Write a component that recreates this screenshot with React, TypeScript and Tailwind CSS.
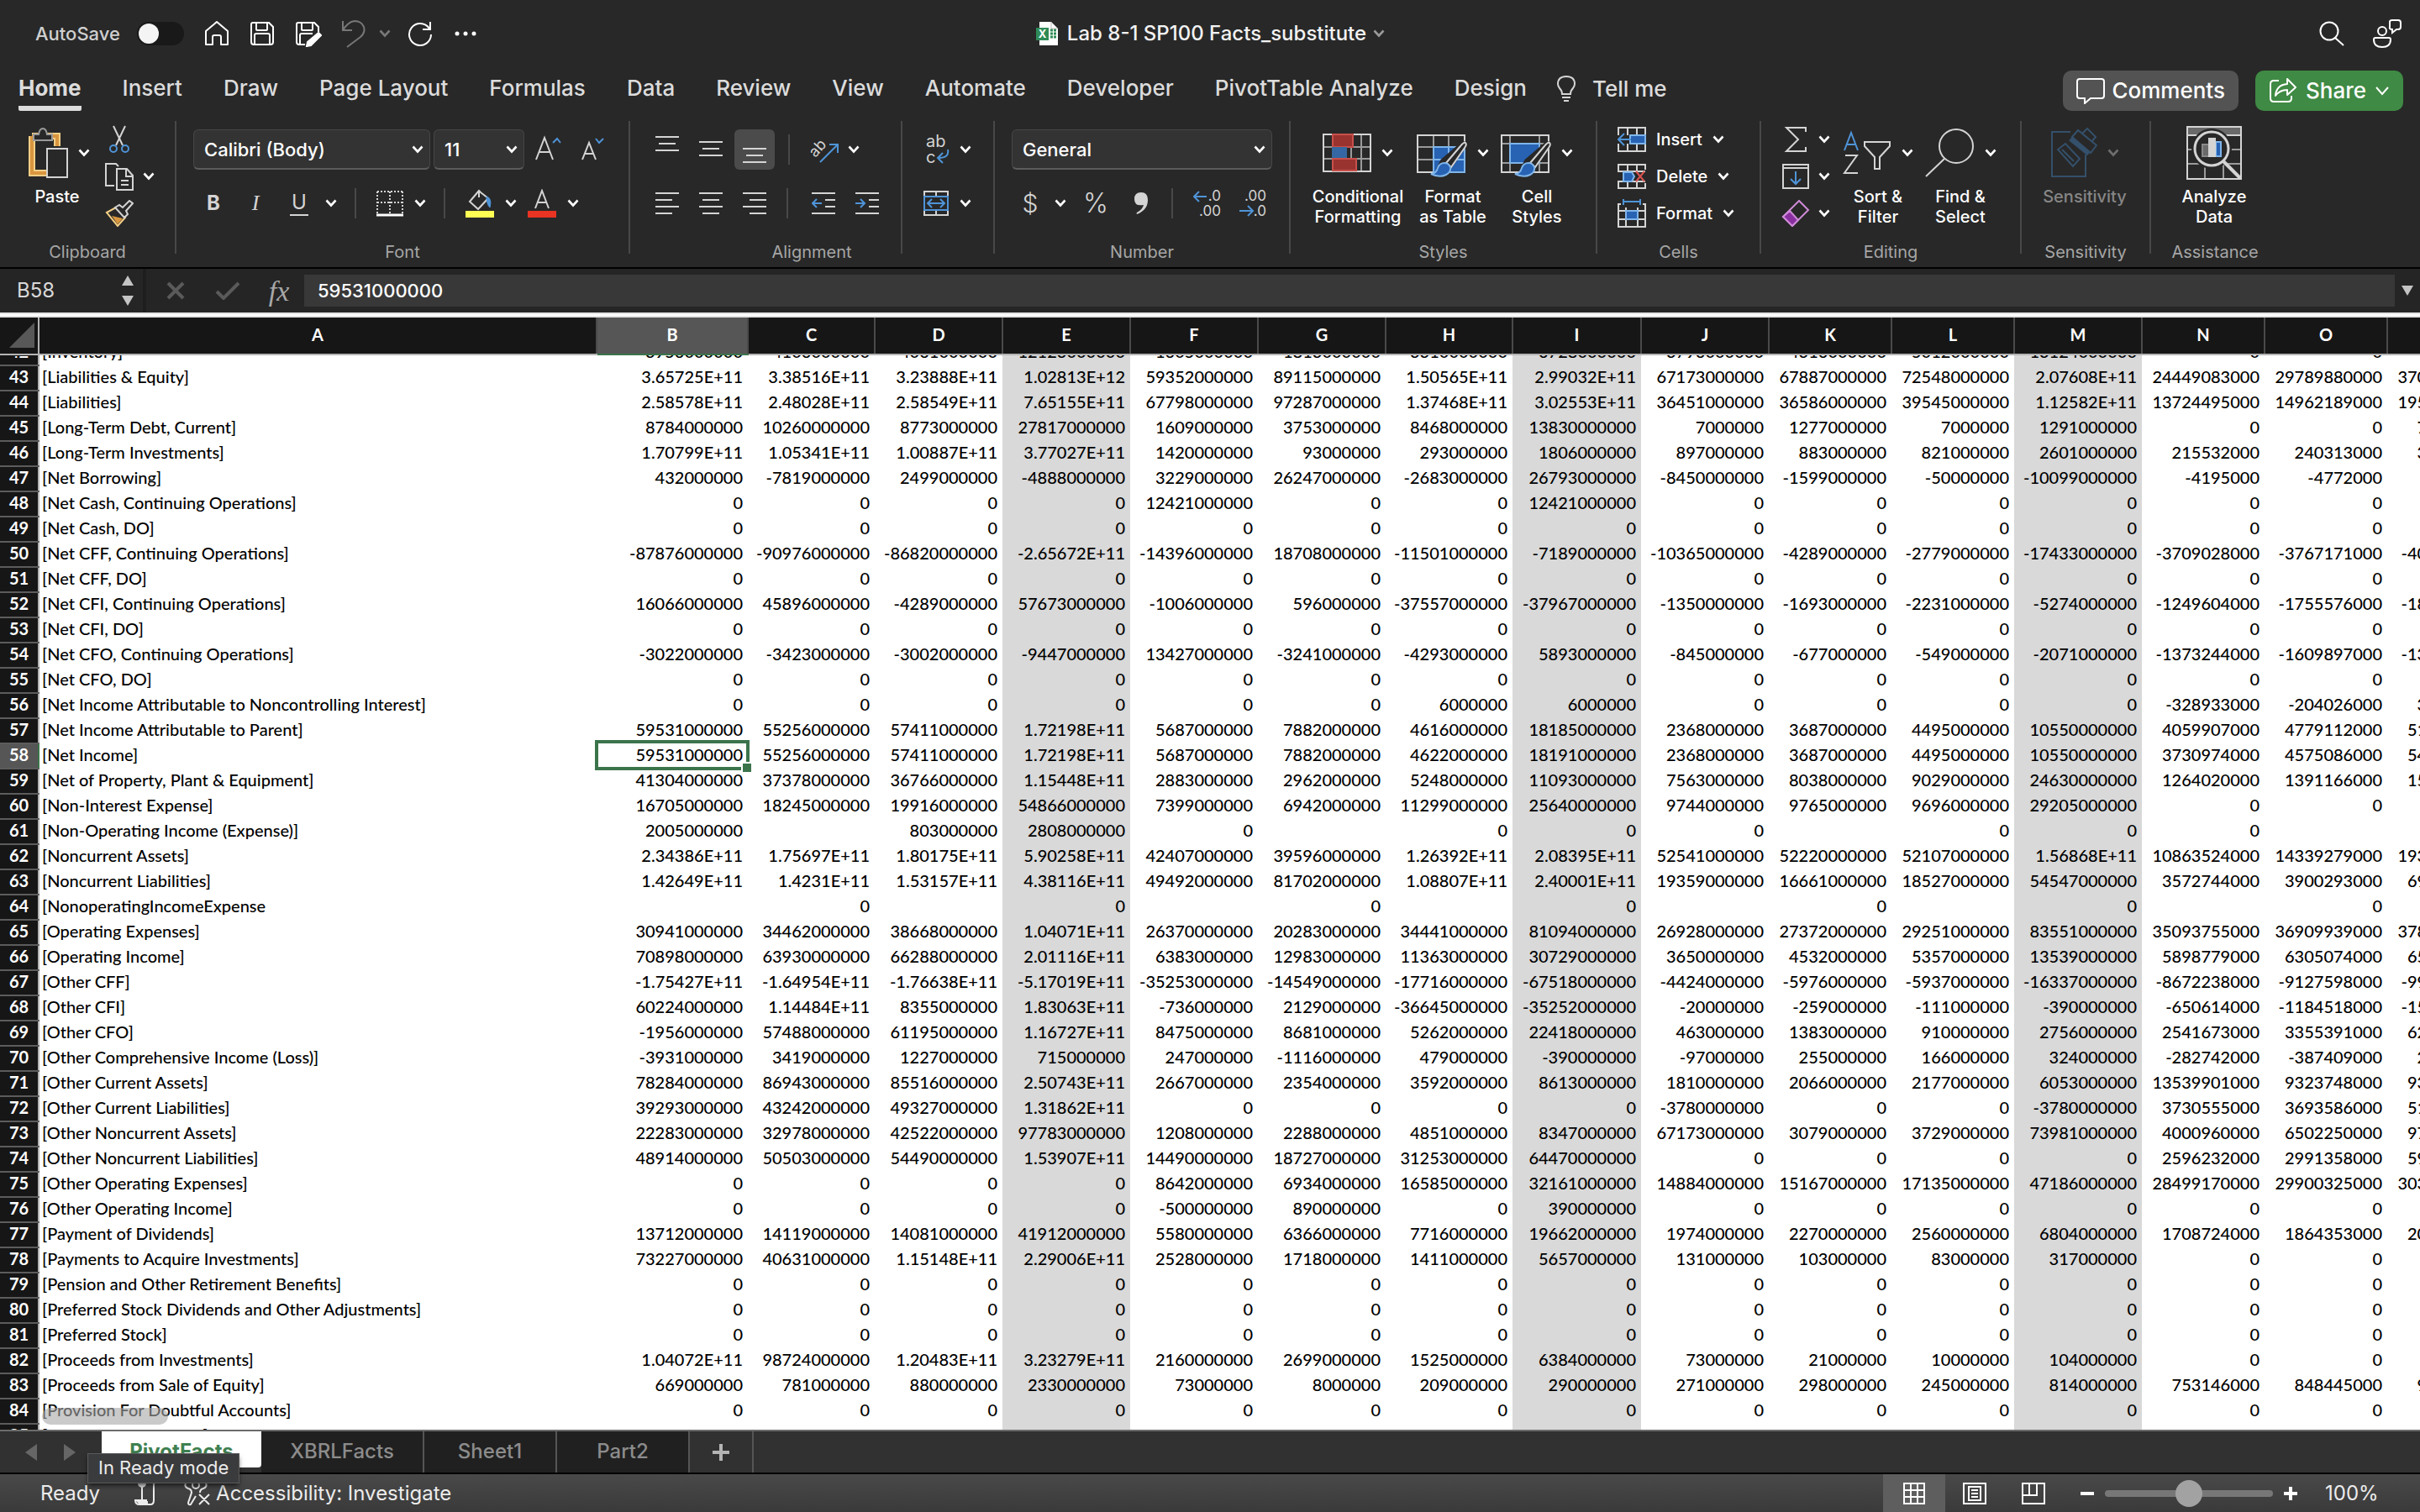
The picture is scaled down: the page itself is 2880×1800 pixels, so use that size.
import type { ReactNode } from "react";

const columns = [
  { name: "A", width: 664 },
  { name: "B", width: 180 },
  { name: "C", width: 151 },
  { name: "D", width: 152 },
  { name: "E", width: 152 },
  { name: "F", width: 152 },
  { name: "G", width: 152 },
  { name: "H", width: 151 },
  { name: "I", width: 153 },
  { name: "J", width: 152 },
  { name: "K", width: 146 },
  { name: "L", width: 146 },
  { name: "M", width: 152 },
  { name: "N", width: 146 },
  { name: "O", width: 146 },
  { name: "P", width: 146 },
];

// columns filled with the subtotal shade
const totals = ["E", "I", "M"];

// label|B|C|...|P, first line is row 42
const source = `
[Inventory]|3956000000|4106000000|4061000000|12123000000|1605000000|1813000000|3310000000|6728000000|3796000000|4316000000|5012000000|13124000000|0|0|
[Liabilities & Equity]|3.65725E+11|3.38516E+11|3.23888E+11|1.02813E+12|59352000000|89115000000|1.50565E+11|2.99032E+11|67173000000|67887000000|72548000000|2.07608E+11|24449083000|29789880000|37078593000
[Liabilities]|2.58578E+11|2.48028E+11|2.58549E+11|7.65155E+11|67798000000|97287000000|1.37468E+11|3.02553E+11|36451000000|36586000000|39545000000|1.12582E+11|13724495000|14962189000|19579092000
[Long-Term Debt, Current]|8784000000|10260000000|8773000000|27817000000|1609000000|3753000000|8468000000|13830000000|7000000|1277000000|7000000|1291000000|0|0|756057000
[Long-Term Investments]|1.70799E+11|1.05341E+11|1.00887E+11|3.77027E+11|1420000000|93000000|293000000|1806000000|897000000|883000000|821000000|2601000000|215532000|240313000|324514000
[Net Borrowing]|432000000|-7819000000|2499000000|-4888000000|3229000000|26247000000|-2683000000|26793000000|-8450000000|-1599000000|-50000000|-10099000000|-4195000|-4772000|
[Net Cash, Continuing Operations]|0|0|0|0|12421000000|0|0|12421000000|0|0|0|0|0|0|
[Net Cash, DO]|0|0|0|0|0|0|0|0|0|0|0|0|0|0|
[Net CFF, Continuing Operations]|-87876000000|-90976000000|-86820000000|-2.65672E+11|-14396000000|18708000000|-11501000000|-7189000000|-10365000000|-4289000000|-2779000000|-17433000000|-3709028000|-3767171000|-4049000000
[Net CFF, DO]|0|0|0|0|0|0|0|0|0|0|0|0|0|0|
[Net CFI, Continuing Operations]|16066000000|45896000000|-4289000000|57673000000|-1006000000|596000000|-37557000000|-37967000000|-1350000000|-1693000000|-2231000000|-5274000000|-1249604000|-1755576000|-1894500000
[Net CFI, DO]|0|0|0|0|0|0|0|0|0|0|0|0|0|0|
[Net CFO, Continuing Operations]|-3022000000|-3423000000|-3002000000|-9447000000|13427000000|-3241000000|-4293000000|5893000000|-845000000|-677000000|-549000000|-2071000000|-1373244000|-1609897000|-1364000000
[Net CFO, DO]|0|0|0|0|0|0|0|0|0|0|0|0|0|0|
[Net Income Attributable to Noncontrolling Interest]|0|0|0|0|0|0|6000000|6000000|0|0|0|0|-328933000|-204026000|329500000
[Net Income Attributable to Parent]|59531000000|55256000000|57411000000|1.72198E+11|5687000000|7882000000|4616000000|18185000000|2368000000|3687000000|4495000000|10550000000|4059907000|4779112000|5107839000
[Net Income]|59531000000|55256000000|57411000000|1.72198E+11|5687000000|7882000000|4622000000|18191000000|2368000000|3687000000|4495000000|10550000000|3730974000|4575086000|5437000000
[Net of Property, Plant & Equipment]|41304000000|37378000000|36766000000|1.15448E+11|2883000000|2962000000|5248000000|11093000000|7563000000|8038000000|9029000000|24630000000|1264020000|1391166000|1545568000
[Non-Interest Expense]|16705000000|18245000000|19916000000|54866000000|7399000000|6942000000|11299000000|25640000000|9744000000|9765000000|9696000000|29205000000|0|0|
[Non-Operating Income (Expense)]|2005000000||803000000|2808000000|0||0|0|0||0|0|0||
[Noncurrent Assets]|2.34386E+11|1.75697E+11|1.80175E+11|5.90258E+11|42407000000|39596000000|1.26392E+11|2.08395E+11|52541000000|52220000000|52107000000|1.56868E+11|10863524000|14339279000|19328800000
[Noncurrent Liabilities]|1.42649E+11|1.4231E+11|1.53157E+11|4.38116E+11|49492000000|81702000000|1.08807E+11|2.40001E+11|19359000000|16661000000|18527000000|54547000000|3572744000|3900293000|6916700000
[NonoperatingIncomeExpense||0||0||0||0||0||0||0|
[Operating Expenses]|30941000000|34462000000|38668000000|1.04071E+11|26370000000|20283000000|34441000000|81094000000|26928000000|27372000000|29251000000|83551000000|35093755000|36909939000|37813400000
[Operating Income]|70898000000|63930000000|66288000000|2.01116E+11|6383000000|12983000000|11363000000|30729000000|3650000000|4532000000|5357000000|13539000000|5898779000|6305074000|6513644000
[Other CFF]|-1.75427E+11|-1.64954E+11|-1.76638E+11|-5.17019E+11|-35253000000|-14549000000|-17716000000|-67518000000|-4424000000|-5976000000|-5937000000|-16337000000|-8672238000|-9127598000|-9941000000
[Other CFI]|60224000000|1.14484E+11|8355000000|1.83063E+11|-736000000|2129000000|-36645000000|-35252000000|-20000000|-259000000|-111000000|-390000000|-650614000|-1184518000|-1530000000
[Other CFO]|-1956000000|57488000000|61195000000|1.16727E+11|8475000000|8681000000|5262000000|22418000000|463000000|1383000000|910000000|2756000000|2541673000|3355391000|6220000000
[Other Comprehensive Income (Loss)]|-3931000000|3419000000|1227000000|715000000|247000000|-1116000000|479000000|-390000000|-97000000|255000000|166000000|324000000|-282742000|-387409000|278700000
[Other Current Assets]|78284000000|86943000000|85516000000|2.50743E+11|2667000000|2354000000|3592000000|8613000000|1810000000|2066000000|2177000000|6053000000|13539901000|9323748000|9334000000
[Other Current Liabilities]|39293000000|43242000000|49327000000|1.31862E+11|0|0|0|0|-3780000000|0|0|-3780000000|3730555000|3693586000|5130000000
[Other Noncurrent Assets]|22283000000|32978000000|42522000000|97783000000|1208000000|2288000000|4851000000|8347000000|67173000000|3079000000|3729000000|73981000000|4000960000|6502250000|9748000000
[Other Noncurrent Liabilities]|48914000000|50503000000|54490000000|1.53907E+11|14490000000|18727000000|31253000000|64470000000|0|0|0|0|2596232000|2991358000|5962000000
[Other Operating Expenses]|0|0|0|0|8642000000|6934000000|16585000000|32161000000|14884000000|15167000000|17135000000|47186000000|28499170000|29900325000|30350900000
[Other Operating Income]|0|0|0|0|-500000000|890000000|0|390000000|0|0|0|0|0|0|
[Payment of Dividends]|13712000000|14119000000|14081000000|41912000000|5580000000|6366000000|7716000000|19662000000|1974000000|2270000000|2560000000|6804000000|1708724000|1864353000|2035200000
[Payments to Acquire Investments]|73227000000|40631000000|1.15148E+11|2.29006E+11|2528000000|1718000000|1411000000|5657000000|131000000|103000000|83000000|317000000|0|0|
[Pension and Other Retirement Benefits]|0|0|0|0|0|0|0|0|0|0|0|0|0|0|
[Preferred Stock Dividends and Other Adjustments]|0|0|0|0|0|0|0|0|0|0|0|0|0|0|
[Preferred Stock]|0|0|0|0|0|0|0|0|0|0|0|0|0|0|
[Proceeds from Investments]|1.04072E+11|98724000000|1.20483E+11|3.23279E+11|2160000000|2699000000|1525000000|6384000000|73000000|21000000|10000000|104000000|0|0|
[Proceeds from Sale of Equity]|669000000|781000000|880000000|2330000000|73000000|8000000|209000000|290000000|271000000|298000000|245000000|814000000|753146000|848445000|945000000
[Provision For Doubtful Accounts]|0|0|0|0|0|0|0|0|0|0|0|0|0|0|
[Repurchase of Equity]|72738000000|66897000000|72358000000|2.11993E+11|12014000000|629000000|978000000|13621000000|238000000|718000000|403000000|1359000000|2639094000|2691114000|2915000000
`;

const rows = source
  .trim()
  .split("\n")
  .map((line, i) => ({ number: 42 + i, cells: line.split("|") }));

const Chevron = ({ className = "text-white" }: { className?: string }) => (
  <svg className={className} width="14" height="10" viewBox="0 0 14 10" fill="none">
    <path d="M1.5 1.5 7 7.5l5.5-6" stroke="currentColor" strokeWidth="2.6" />
  </svg>
);

type IconProps = { w: number; h: number; children: ReactNode; className?: string };

const Icon = ({ w, h, children, className = "" }: IconProps) => (
  <svg
    className={`shrink-0 ${className}`}
    width={w}
    height={h}
    viewBox={`0 0 ${w} ${h}`}
    fill="none"
    stroke="#d4d4d4"
    strokeWidth="2"
    aria-hidden="true"
  >
    {children}
  </svg>
);

type ToolProps = { label: string; className?: string; children: ReactNode };

const Tool = ({ label, className = "", children }: ToolProps) => (
  <button
    type="button"
    aria-label={label}
    className={`flex shrink-0 items-center justify-center ${className}`}
  >
    {children}
  </button>
);

const More = ({ label, className = "" }: { label: string; className?: string }) => (
  <Tool label={`${label} options`} className={className}>
    <Chevron />
  </Tool>
);

const Line = ({ className = "" }: { className?: string }) => (
  <span className={`h-9 w-0.5 shrink-0 bg-[#484848] ${className}`} />
);

const Divider = () => <span className="h-[158px] w-0.5 shrink-0 bg-[#484848]" />;

type GroupProps = { title: string; className: string; children: ReactNode };

const Group = ({ title, className, children }: GroupProps) => (
  <section className={`flex shrink-0 flex-col ${className}`}>
    <div className="flex h-36">{children}</div>
    <h2 className="text-center text-xl leading-6 text-[#a6a6a6]">{title}</h2>
  </section>
);

type BigProps = { icon: ReactNode; lines: string[]; className: string; disabled?: boolean; more?: boolean };

const BigButton = ({ icon, lines, className, disabled, more = true }: BigProps) => (
  <button
    type="button"
    disabled={disabled}
    className={`flex shrink-0 flex-col items-center pt-1.5 text-xl leading-6 font-medium whitespace-nowrap ${disabled ? "text-[#868686]" : "text-white"} ${className}`}
  >
    <span className="flex h-16 items-center gap-3">
      {icon}
      {more && <Chevron className={disabled ? "text-[#6e6e6e]" : "text-white"} />}
    </span>
    <span className="mt-2 flex flex-col">
      {lines.map((line) => (
        <span key={line}>{line}</span>
      ))}
    </span>
  </button>
);

type PickerProps = { label: string; value: string; className: string };

const Picker = ({ label, value, className }: PickerProps) => (
  <div className={`relative flex h-12 shrink-0 items-center ${className}`}>
    <select
      aria-label={label}
      className="h-full w-full appearance-none rounded-md border border-b-2 border-[#464646] border-b-[#5c5c5c] bg-[#333] pl-3 text-[22px] leading-8 font-medium text-white"
    >
      <option>{value}</option>
    </select>
    <Chevron className="pointer-events-none absolute right-2 text-white" />
  </div>
);

const Lines = ({ top, widths, align }: { top: number; widths: number[]; align: "l" | "c" | "r" }) => (
  <Icon w={28} h={32}>
    {widths.map((w, i) => {
      const x = align === "l" ? 0 : align === "c" ? (28 - w) / 2 : 28 - w;
      return <path key={i} d={`M${x} ${top + i * 8}h${w}`} />;
    })}
  </Icon>
);

const Brush = () => (
  <>
    <path d="M57 20 40 45l-8 7-5-4 4-8 22-19q3-3 4-1Z" fill="#282828" stroke="#282828" strokeWidth="6" />
    <path d="M58 18q2 2-1 6L41 47l-6-5 17-20q4-5 6-4Z" fill="#282828" />
    <path
      d="M33 42q-6 0-8 6-2 7-8 7 10 5 18 1 6-3 5-9-2-5-7-5Z"
      fill="#2762b3"
      stroke="#7fb5ea"
    />
  </>
);

const TitleBar = () => (
  <div className="flex h-19 items-center pt-1">
    <div className="flex flex-1 items-center pl-[42px]">
      <label className="flex items-center gap-5 text-[22px] font-medium text-[#cfcfcf]">
        AutoSave
        <input type="checkbox" className="peer sr-only" />
        <span className="flex h-7 w-14 items-center rounded-full bg-[#191919] pl-0.5">
          <span className="size-6 rounded-full bg-[#f4f4f4]" />
        </span>
      </label>
      <div className="flex items-center pl-6">
        <Tool label="Home">
          <Icon w={30} h={32} className="stroke-white">
            <path d="M2 13 15 2l13 11v16h-8v-9q0-2-2-2h-6q-2 0-2 2v9H2Z" strokeLinejoin="round" />
          </Icon>
        </Tool>
        <Tool label="Save" className="ml-6">
          <Icon w={30} h={32} className="stroke-white">
            <path d="M4 3h19l5 5v18q0 3-3 3H5q-3 0-3-3V5q0-2 2-2Z" />
            <path d="M8 3v8q0 1 1 1h11q1 0 1-1V3M6 29V18q0-2 2-2h14q2 0 2 2v11" />
          </Icon>
        </Tool>
        <Tool label="Save As" className="ml-6">
          <Icon w={32} h={32} className="stroke-white">
            <path d="M28 14V8l-5-5H4Q2 3 2 5v21q0 3 3 3h7" />
            <path d="M8 3v8q0 1 1 1h11q1 0 1-1V3M6 29V18q0-2 2-2h13" />
            <path d="m28 15 3 3-12 12-5 1 1-5Z" fill="#fff" />
          </Icon>
        </Tool>
        <Tool label="Undo" className="ml-6">
          <Icon w={28} h={34} className="stroke-[#777]">
            <path d="M1 2v11h11M1 13Q7 3 15 2q8 0 11 7 2 7-4 12L6 33" />
          </Icon>
        </Tool>
        <Tool label="Undo options" className="ml-4">
          <Chevron className="text-[#777]" />
        </Tool>
        <Tool label="Redo" className="ml-5">
          <Icon w={30} h={32} className="stroke-white">
            <path d="M26 10A13 13 0 1 0 28 17M27 2v9h-9" />
          </Icon>
        </Tool>
        <Tool label="More commands" className="ml-6">
          <Icon w={30} h={8} className="fill-white stroke-none">
            <circle cx="5" cy="4" r="2.5" />
            <circle cx="15" cy="4" r="2.5" />
            <circle cx="25" cy="4" r="2.5" />
          </Icon>
        </Tool>
      </div>
    </div>
    <div className="flex items-center pr-5">
      <Icon w={28} h={32}>
        <path d="M5 2h14l8 8v20H5Z" fill="#fff" stroke="none" />
        <path d="M19 2v8h8" stroke="#bbb" strokeWidth="1" />
        <path d="M18 12h7M18 16h7M18 20h7" stroke="#2f8b57" strokeWidth="3" strokeDasharray="3 1" />
        <path d="M1 9h15v15H1Z" fill="#2f8b57" stroke="none" />
        <text x="8.5" y="21" textAnchor="middle" className="fill-white text-[13px] font-bold" stroke="none">
          X
        </text>
      </Icon>
      <h1 className="pr-2 pl-2.5 text-2xl font-medium text-[#f2f2f2]">Lab 8-1 SP100 Facts_substitute</h1>
      <Chevron className="text-[#999]" />
    </div>
    <div className="flex flex-1 items-center justify-end gap-8 pr-[22px]">
      <Tool label="Search">
        <Icon w={30} h={30} className="stroke-white">
          <circle cx="12" cy="12" r="10.5" />
          <path d="m19 20 10 9" />
        </Icon>
      </Tool>
      <Tool label="Share feedback">
        <Icon w={36} h={34} className="stroke-white">
          <circle cx="13" cy="14" r="5" />
          <path d="M3 24q0-2 2-2h16q2 0 2 2 0 9-10 9T3 24Z" />
          <path d="M22 3q0-2 3-2h7q3 0 3 3v5q0 3-3 3h-2l-5 4v-4q-4 0-3-3Z" />
        </Icon>
      </Tool>
    </div>
  </div>
);

const menu = [
  "Insert",
  "Draw",
  "Page Layout",
  "Formulas",
  "Data",
  "Review",
  "View",
  "Automate",
  "Developer",
  "PivotTable Analyze",
  "Design",
];

const Menu = () => (
  <nav className="flex h-17 items-start pl-[22px] text-[26px] leading-[30px] font-medium text-[#dcdcdc]">
    <ul className="flex gap-[49px] pt-3.5 whitespace-nowrap">
      <li>
        <a href="#home" className="block rounded-b-xs border-b-[6px] border-[#dcdcdc] pb-1.5 font-bold">
          Home
        </a>
      </li>
      {menu.map((item) => (
        <li key={item}>
          <a href="#tab">{item}</a>
        </li>
      ))}
    </ul>
    <button type="button" className="ml-9 flex items-center gap-5 pt-3.5">
      <Icon w={22} h={32}>
        <path d="M6 22q0-4-3-7-2-3-2-5 0-9 10-9t10 9q0 2-2 5-3 3-3 7ZM6 26h10M8 30h6" />
      </Icon>
      Tell me
    </button>
    <div className="ml-auto flex gap-5 pt-2 pr-5 text-white">
      <button type="button" className="flex h-12 items-center gap-2 rounded-[10px] bg-[#535353] px-4">
        <Icon w={34} h={32} className="stroke-white">
          <path d="M4 2h26q3 0 3 3v17q0 3-3 3H17l-7 6v-6H4q-3 0-3-3V5q0-3 3-3Z" />
        </Icon>
        Comments
      </button>
      <button type="button" className="flex h-12 items-center gap-2.5 rounded-[10px] bg-[#3f8a44] px-4">
        <Icon w={34} h={30} className="stroke-white">
          <path d="M12 3H6Q2 3 2 7v17q0 4 4 4h17q4 0 4-4v-3" />
          <path d="M22 1v6Q9 8 8 21q5-7 14-7v6l10-9Z" strokeLinejoin="round" />
        </Icon>
        Share
        <svg width="18" height="12" viewBox="0 0 18 12" fill="none">
          <path d="m2 2 7 8 7-8" stroke="currentColor" strokeWidth="2" />
        </svg>
      </button>
    </div>
  </nav>
);

const Ribbon = () => (
  <div className="flex h-[174px]">
    <Group title="Clipboard" className="w-52">
      <BigButton
        className="ml-7 w-20"
        lines={["Paste"]}
        icon={
          <Icon w={52} h={60}>
            <path d="M9 10h30v12M9 10v44h18" stroke="#f3cf86" strokeWidth="8" />
            <path d="M9 10h30v12M9 10v44h18" stroke="#d9963f" strokeWidth="4" />
            <path d="M11 15V8h6q1-7 5-7t5 7h6v7Z" fill="#282828" stroke="#9a9a9a" />
            <path d="M27 25h24v34H27Z" fill="#282828" />
          </Icon>
        }
      />
      <div className="flex flex-col gap-2 pt-1 pl-4">
        <div className="flex h-9 items-center">
          <Tool label="Cut" className="w-9">
            <Icon w={24} h={34}>
              <path d="M5 1l11 23M19 1 8 24" />
              <circle cx="5" cy="28" r="4" stroke="#4f94d8" />
              <circle cx="19" cy="28" r="4" stroke="#4f94d8" />
            </Icon>
          </Tool>
        </div>
        <div className="flex h-9 items-center gap-2.5">
          <Tool label="Copy" className="w-9">
            <Icon w={34} h={34}>
              <path d="M11 28H1V2h12l3 3" />
              <path d="M14 8h12l7 8v17H14ZM25 8v9h8M19 22h9M19 27h9" />
            </Icon>
          </Tool>
          <More label="Copy" />
        </div>
        <div className="flex h-9 items-center">
          <Tool label="Format Painter" className="w-9">
            <Icon w={34} h={32}>
              <path d="m2 15 11-6 11 12-9 10Z" fill="#282828" stroke="#f3cf86" />
              <path d="m8 19 13 3-6 7Z" fill="#d9963f" stroke="none" />
              <path d="m12 9 5-3 4 3 8-8 4 3-8 9 2 4-4 4Z" fill="#282828" />
            </Icon>
          </Tool>
        </div>
      </div>
    </Group>
    <Divider />
    <Group title="Font" className="w-[538px]">
      <div className="flex flex-col gap-4 pt-2.5 pl-5">
        <div className="flex h-12 items-center">
          <Picker label="Font" value="Calibri (Body)" className="w-[282px]" />
          <Picker label="Font size" value="11" className="ml-1 w-[108px]" />
          <Tool label="Increase Font Size" className="ml-3">
            <Icon w={34} h={34}>
              <path d="m2 29 10-26 10 26M6 20h12" />
              <path d="m22 9 5-5 4 5" stroke="#4f94d8" />
            </Icon>
          </Tool>
          <Tool label="Decrease Font Size" className="ml-5">
            <Icon w={32} h={34}>
              <path d="m3 29 8-20 8 20M6 22h10" />
              <path d="m19 4 4 5 5-5" stroke="#4f94d8" />
            </Icon>
          </Tool>
        </div>
        <div className="flex h-12 items-center text-2xl text-[#d4d4d4]">
          <Tool label="Bold" className="w-12 font-bold">
            B
          </Tool>
          <Tool label="Italic" className="w-13 font-['Liberation_Serif'] text-[26px] italic">
            I
          </Tool>
          <Tool label="Underline" className="w-13">
            <span className="border-b-2 px-0.5 leading-7">U</span>
          </Tool>
          <More label="Underline" className="w-6" />
          <Line className="ml-4" />
          <Tool label="Borders" className="ml-6">
            <Icon w={32} h={32}>
              <path d="M1 2h30M1 2v26M31 2v26M16 2v26M1 15h30" strokeDasharray="2 2" />
              <path d="M0 30h32" stroke="#fff" strokeWidth="3" />
            </Icon>
          </Tool>
          <More label="Borders" className="ml-2 w-6" />
          <Line className="ml-4" />
          <Tool label="Fill Color" className="ml-6">
            <Icon w={34} h={34}>
              <path d="M16 2 5 15l10 9 12-13-9-7Zm0 0v8" />
              <path d="M25 9q7 2 4 13-4-4-4-13Z" fill="#4f94d8" stroke="#4f94d8" strokeWidth="1" />
              <path d="M0 26h34v8H0Z" fill="#ffff54" stroke="none" />
            </Icon>
          </Tool>
          <More label="Fill Color" className="ml-2.5 w-5" />
          <Tool label="Font Color" className="ml-2.5">
            <Icon w={34} h={34}>
              <path d="m9 23 8-21 8 21M12 16h10" />
              <path d="M0 26h34v8H0Z" fill="#e93323" stroke="none" />
            </Icon>
          </Tool>
          <More label="Font Color" className="ml-2.5 w-5" />
        </div>
      </div>
    </Group>
    <Divider />
    <Group title="Alignment" className="w-[432px]">
      <div className="flex w-[322px] shrink-0 flex-col gap-4 pt-2.5 pl-[30px]">
        <div className="flex h-12 items-center">
          <Tool label="Top Align">
            <Lines top={1} widths={[28, 20, 28]} align="c" />
          </Tool>
          <Tool label="Middle Align" className="ml-6">
            <Lines top={7} widths={[28, 20, 28]} align="c" />
          </Tool>
          <Tool label="Bottom Align" className="ml-3.5 h-12 w-12 rounded-md bg-[#4b4b4b]">
            <Lines top={15} widths={[28, 20, 28]} align="c" />
          </Tool>
          <Line className="ml-4" />
          <Tool label="Orientation" className="ml-6">
            <Icon w={34} h={34}>
              <text x="2" y="22" transform="rotate(-48 10 20)" className="fill-[#d4d4d4] text-[18px]" stroke="none">
                ab
              </text>
              <path d="M12 32 32 12M23 11h10v10" stroke="#4f94d8" />
            </Icon>
          </Tool>
          <More label="Orientation" className="ml-2 w-5" />
        </div>
        <div className="flex h-12 items-center">
          <Tool label="Align Left">
            <Lines top={4} widths={[28, 20, 28, 20]} align="l" />
          </Tool>
          <Tool label="Center" className="ml-6">
            <Lines top={4} widths={[28, 20, 28, 20]} align="c" />
          </Tool>
          <Tool label="Align Right" className="ml-6">
            <Lines top={4} widths={[28, 20, 28, 20]} align="r" />
          </Tool>
          <Line className="ml-6" />
          <Tool label="Decrease Indent" className="ml-7">
            <Icon w={28} h={32}>
              <path d="M0 4h28M16 12h12M16 20h12M0 28h28" />
              <path d="M12 16H2M6 11l-5 5 5 5" stroke="#4f94d8" />
            </Icon>
          </Tool>
          <Tool label="Increase Indent" className="ml-6">
            <Icon w={28} h={32}>
              <path d="M0 4h28M16 12h12M16 20h12M0 28h28" />
              <path d="M0 16h10M6 11l5 5-5 5" stroke="#4f94d8" />
            </Icon>
          </Tool>
        </div>
      </div>
      <Divider />
      <div className="flex flex-col gap-4 pt-2.5 pl-6">
        <div className="flex h-12 items-center gap-3">
          <Tool label="Wrap Text">
            <Icon w={32} h={38}>
              <text x="4" y="16" className="fill-[#d4d4d4] text-[20px] leading-none" stroke="none">
                ab
              </text>
              <text x="4" y="35" className="fill-[#d4d4d4] text-[20px] leading-none" stroke="none">
                c
              </text>
              <path d="M30 19q2 10-11 10M24 23l-6 6 6 6" stroke="#4f94d8" />
            </Icon>
          </Tool>
          <More label="Wrap Text" />
        </div>
        <div className="flex h-12 items-center gap-3">
          <Tool label="Merge & Center">
            <Icon w={32} h={32}>
              <path d="M2 2h28v28H2ZM16 2v28" />
              <path d="M2 8h28v16H2Z" fill="#282828" stroke="#4f94d8" />
              <path d="M7 16h18M11 11l-5 5 5 5M21 11l5 5-5 5" stroke="#4f94d8" />
            </Icon>
          </Tool>
          <More label="Merge & Center" />
        </div>
      </div>
    </Group>
    <Divider />
    <Group title="Number" className="w-[350px]">
      <div className="flex flex-col gap-4 pt-2.5 pl-5">
        <Picker label="Number Format" value="General" className="w-[310px]" />
        <div className="flex h-12 items-center text-[#d4d4d4]">
          <Tool label="Currency" className="ml-3 w-5 text-[30px] leading-9 font-light">
            $
          </Tool>
          <More label="Currency" className="ml-4 w-5" />
          <Tool label="Percent Style" className="ml-3.5 w-9 text-[32px] leading-9 font-light">
            %
          </Tool>
          <Tool label="Comma Style" className="ml-6 w-6">
            <Icon w={18} h={28}>
              <path d="M9 1q8 0 8 9 0 12-13 17-1-1 0-2 7-4 8-9-11 2-11-7Q1 1 9 1Z" fill="#d4d4d4" stroke="none" />
            </Icon>
          </Tool>
          <Line className="ml-6" />
          <Tool label="Increase Decimal" className="ml-6">
            <Icon w={34} h={38}>
              <text x="33" y="16" textAnchor="end" className="fill-[#d4d4d4] text-[17px] leading-none" stroke="none">.0</text>
              <text x="33" y="34" textAnchor="end" className="fill-[#d4d4d4] text-[17px] leading-none" stroke="none">.00</text>
              <path d="M16 11H1M7 5l-6 6 6 6" stroke="#4f94d8" />
            </Icon>
          </Tool>
          <Tool label="Decrease Decimal" className="ml-5">
            <Icon w={34} h={38}>
              <text x="33" y="16" textAnchor="end" className="fill-[#d4d4d4] text-[17px] leading-none" stroke="none">.00</text>
              <text x="33" y="34" textAnchor="end" className="fill-[#d4d4d4] text-[17px] leading-none" stroke="none">.0</text>
              <path d="M1 28h15M11 22l6 6-6 6" stroke="#4f94d8" />
            </Icon>
          </Tool>
        </div>
      </div>
    </Group>
    <Divider />
    <Group title="Styles" className="w-[363px]">
      <BigButton
        className="ml-5 w-[120px]"
        lines={["Conditional", "Formatting"]}
        icon={
          <Icon w={58} h={46}>
            <path d="M1 16h56M1 30h56M12 1v44M46 1v44M34 1v44" stroke="#9a9a9a" />
            <path d="M1 1h56v44H1Z" />
            <path d="M12 1h24v15H12Z" fill="#983330" stroke="#c8504b" />
            <path d="M12 17h16v12H12Z" fill="#3567a5" stroke="#35689f" />
            <path d="M12 30h28v14H12Z" fill="#983330" stroke="#c8504b" />
          </Icon>
        }
      />
      <BigButton
        className="ml-2 w-[90px]"
        lines={["Format", "as Table"]}
        icon={
          <Icon w={60} h={60}>
            <path d="M1 23h56M1 38h56M20 9v44M38 9v44" stroke="#9a9a9a" />
            <path d="M1 9h56v44H1Z" />
            <path d="M20 23h37v30H20ZM20 38h37M38 23v30" fill="#2762b3" stroke="#7fb5ea" />
            <Brush />
          </Icon>
        }
      />
      <BigButton
        className="ml-2.5 w-[90px]"
        lines={["Cell", "Styles"]}
        icon={
          <Icon w={60} h={60}>
            <path d="M1 19h56M1 42h56M11 9v44M46 9v44" stroke="#9a9a9a" />
            <path d="M1 9h56v44H1Z" />
            <path d="M11 19h35v23H11Z" fill="#2762b3" stroke="#7fb5ea" />
            <Brush />
          </Icon>
        }
      />
    </Group>
    <Divider />
    <Group title="Cells" className="w-[193px]">
      <div className="flex flex-col gap-2 pt-1 pl-6 text-xl font-medium text-white">
        <button type="button" className="flex h-9 items-center gap-3">
          <Icon w={34} h={30}>
            <path d="M1 1h32v28H1ZM12 1v28M23 1v28" />
            <path d="M0 10h34v10H0Z" fill="#282828" stroke="none" />
            <path d="M15 10h18v10H15Z" fill="#2762b3" stroke="#7fb5ea" />
            <path d="M16 15H2M8 8l-7 7 7 7" stroke="#4f94d8" />
          </Icon>
          Insert
          <Chevron />
        </button>
        <button type="button" className="flex h-9 items-center gap-3">
          <Icon w={34} h={30}>
            <path d="M33 7V1H1v8h32M33 23v6H1v-8h32M12 1v8M23 1v8M12 21v8M23 21v8" />
            <path d="M7 10h10l3 5-3 6H7Z" fill="#2762b3" stroke="#7fb5ea" />
            <path d="m22 9 10 12M32 9 22 21" stroke="#d9534f" />
          </Icon>
          Delete
          <Chevron />
        </button>
        <button type="button" className="flex h-9 items-center gap-3">
          <Icon w={34} h={34}>
            <path d="M4 6H1v27h32V6h-3M1 14h32M1 24h32M10 10v23M24 10v23" />
            <path d="M10 14h14v10H10Z" fill="#2762b3" stroke="#7fb5ea" />
            <path d="M7 3h20M7 0v7M27 0v7" stroke="#4f94d8" />
          </Icon>
          Format
          <Chevron />
        </button>
      </div>
    </Group>
    <Divider />
    <Group title="Editing" className="w-[308px]">
      <div className="flex flex-col gap-2 pt-1 pl-6">
        <div className="flex h-9 items-center gap-2.5">
          <Tool label="AutoSum">
            <Icon w={34} h={30}>
              <path d="M29 6V1H6l14 14L6 29h23v-5" />
            </Icon>
          </Tool>
          <More label="AutoSum" />
        </div>
        <div className="flex h-9 items-center gap-2.5">
          <Tool label="Fill">
            <Icon w={34} h={30}>
              <path d="M2 1h30v28H2ZM2 5h30" />
              <path d="M17 9v15M11 18l6 6 6-6" stroke="#4f94d8" />
            </Icon>
          </Tool>
          <More label="Fill" />
        </div>
        <div className="flex h-9 items-center gap-2.5">
          <Tool label="Clear">
            <Icon w={34} h={32}>
              <path d="M21 1 32 12 13 31 2 20Z" stroke="#cf8bd8" />
              <path d="m10 13 10 11-7 7L2 20Z" fill="#8a2fa0" stroke="#cf8bd8" />
            </Icon>
          </Tool>
          <More label="Clear" />
        </div>
      </div>
      <BigButton
        className="ml-3 w-[90px]"
        lines={["Sort &", "Filter"]}
        icon={
          <Icon w={58} h={54}>
            <path d="m2 24 8-21 8 21M5 17h10" stroke="#4f94d8" />
            <path d="M3 30h14L2 51h16" />
            <path d="M26 14h30v5L44 32v14h-6V32L26 19Z" />
          </Icon>
        }
      />
      <BigButton
        className="ml-2 w-[90px]"
        lines={["Find &", "Select"]}
        icon={
          <Icon w={60} h={60}>
            <circle cx="38" cy="22" r="20" />
            <path d="M24 37 2 58" />
          </Icon>
        }
      />
    </Group>
    <Divider />
    <Group title="Sensitivity" className="w-[152px]">
      <BigButton
        disabled
        className="w-[150px]"
        lines={["Sensitivity"]}
        icon={
          <Icon w={56} h={60} className="stroke-[#34506b]">
            <path d="M24 5H2v53h40V32" />
            <path d="m9 26 9-7 17 18-8 9ZM14 26l14 14" />
            <path d="m26 11 7-8 22 18-7 9Z" />
            <path d="m24 13 22 18" strokeWidth="6" />
            <path d="m38 7 6-6 10 10-5 6" />
          </Icon>
        }
      />
    </Group>
    <Divider />
    <Group title="Assistance" className="w-[152px]">
      <BigButton
        more={false}
        className="w-[150px]"
        lines={["Analyze", "Data"]}
        icon={
          <Icon w={66} h={64}>
            <path d="M1 1h64v10H1Z" fill="#6a6a6a" stroke="none" />
            <path d="M1 28h64M1 45h64M22 45v18M44 45v18" stroke="#9a9a9a" />
            <path d="M1 1h64v62H1ZM1 11h64" />
            <circle cx="30" cy="27" r="23" fill="#282828" stroke="#282828" />
            <path d="M19 22h8v14h-8Z" fill="#6a6a6a" stroke="#888" />
            <path d="M35 19h6v17h-6Z" fill="#2762b3" stroke="#7fb5ea" />
            <path d="M26 14h9v23h-9Z" fill="#d4d4d4" stroke="none" />
            <circle cx="30" cy="27" r="20" strokeWidth="3" />
            <path d="m44 42 20 20" strokeWidth="4" />
          </Icon>
        }
      />
    </Group>
  </div>
);

const FormulaBar = () => (
  <div className="flex h-[54px] items-center border-t-2 border-black bg-[#252525]">
    <div className="flex h-full w-[174px] items-center justify-between border-r-4 border-[#1e1e1e] pr-2.5">
      <input
        aria-label="Name Box"
        className="w-28 bg-transparent pl-5 text-2xl text-[#d8d8d8]"
        defaultValue="B58"
      />
      <Icon w={16} h={38} className="fill-[#c4c4c4] stroke-none">
        <path d="M8 1l7 12H1ZM8 37l7-12H1Z" />
      </Icon>
    </div>
    <Tool label="Cancel" className="ml-6">
      <Icon w={22} h={22}>
        <path d="m2 2 18 18M20 2 2 20" stroke="#5a5a5a" strokeWidth="4" />
      </Icon>
    </Tool>
    <Tool label="Enter" className="ml-9">
      <Icon w={30} h={22}>
        <path d="m2 12 8 8L28 2" stroke="#5a5a5a" strokeWidth="4" />
      </Icon>
    </Tool>
    <Tool label="Insert Function" className="ml-7 w-9 font-['Liberation_Serif'] text-[34px] text-[#a8a8a8] italic">
      fx
    </Tool>
    <input
      aria-label="Formula"
      className="ml-3 h-[38px] min-w-0 flex-1 bg-[#383838] pl-4 text-[22px] font-medium text-white"
      defaultValue="59531000000"
    />
    <Tool label="Expand Formula Bar" className="w-[30px]">
      <Icon w={16} h={14} className="fill-[#c4c4c4] stroke-none">
        <path d="M8 13 1 1h14Z" />
      </Icon>
    </Tool>
  </div>
);

const Sheet = () => (
  <div className="relative min-h-0 flex-1 overflow-hidden border-t-[6px] border-double border-[#e4e4e4] bg-white font-['Lato','Liberation_Sans',sans-serif] text-[20px] text-black">
    <table className="w-0 table-fixed border-collapse">
      <colgroup>
        <col width={46} />
        {columns.map((c) => (
          <col key={c.name} width={c.width} />
        ))}
      </colgroup>
      <thead>
        <tr className="h-11 bg-[#161616] text-white">
          <th aria-label="Select all" className="border-r-2 border-b-2 border-[#b4b4b4] p-0">
            <svg className="ml-auto" width="34" height="32" viewBox="0 0 34 32">
              <path d="M30 0v30H0Z" fill="#585858" />
            </svg>
          </th>
          {columns.map((c) => (
            <th
              key={c.name}
              scope="col"
              className={`border-r-2 border-b-2 border-r-[#4a4a4a] p-0 pb-1 font-bold ${c.name === "B" ? "border-b-[#3b744b] bg-[#565656]" : "border-b-[#b4b4b4]"}`}
            >
              {c.name}
            </th>
          ))}
        </tr>
      </thead>
      <tbody>
        {rows.map((row) => (
          <tr key={row.number} className={row.number === 42 ? "h-3" : "h-[30px]"}>
            <th
              scope="row"
              className={`border-r-2 border-b-2 border-b-[#5c5c5c] p-0 font-bold text-white ${row.number === 58 ? "border-r-[#3b744b] bg-[#565656]" : "border-r-[#b4b4b4] bg-[#161616]"}`}
            >
              <div
                className={`flex items-end justify-center overflow-hidden pb-1 leading-6 ${row.number === 42 ? "h-2.5" : "h-7"}`}
              >
                {row.number}
              </div>
            </th>
            {columns.map((c, i) => (
              <td
                key={c.name}
                className={`p-0 font-medium whitespace-nowrap ${i ? "pr-1.5" : "pl-[3px]"} ${totals.includes(c.name) ? "bg-[#d9d9d9]" : ""} ${row.number === 58 && i === 1 ? "relative" : ""}`}
              >
                <div
                  className={`flex items-end overflow-hidden pb-1 leading-[26px] ${i ? "justify-end" : ""} ${row.number === 42 ? "h-3" : "h-[30px]"}`}
                >
                  {row.cells[i]}
                </div>
                {row.number === 58 && i === 1 && (
                  <>
                    <span className="absolute -inset-x-0.5 -top-1 -bottom-0.5 border-4 border-[#3b744b]" />
                    <span className="absolute -right-1.5 -bottom-1.5 size-3.5 border-2 border-white bg-[#3b744b]" />
                  </>
                )}
              </td>
            ))}
          </tr>
        ))}
      </tbody>
    </table>
    <div className="absolute bottom-1.5 left-[50px] h-5 w-[150px] rounded-full bg-[#a6a6a6]/60" />
  </div>
);

const SheetTabs = () => (
  <nav className="flex h-[53px] shrink-0 items-stretch border-t-2 border-b-2 border-t-[#6a6c6a] border-b-black bg-[#313131] text-2xl font-medium text-[#8c8c8c]">
    <div className="flex w-[121px] items-center gap-8 pl-[30px]">
      <Tool label="Previous sheet">
        <Icon w={14} h={20} className="fill-[#666] stroke-none">
          <path d="M14 0v20L0 10Z" />
        </Icon>
      </Tool>
      <Tool label="Next sheet">
        <Icon w={14} h={20} className="fill-[#666] stroke-none">
          <path d="M0 0v20l14-10Z" />
        </Icon>
      </Tool>
    </div>
    <a href="#pivot" className="mb-1.5 flex w-[190px] items-center justify-center rounded-b-sm bg-white pt-1 font-bold text-[#3f8050]">
      PivotFacts
    </a>
    <a href="#xbrl" className="flex w-[194px] items-center justify-center border-r-2 border-[#555] bg-[#202020] pb-0.5">
      XBRLFacts
    </a>
    <a href="#sheet1" className="flex w-[158px] items-center justify-center border-r-2 border-[#555] bg-[#202020] pb-0.5">
      Sheet1
    </a>
    <a href="#part2" className="flex w-[158px] items-center justify-center border-r-2 border-[#555] bg-[#202020] pb-0.5">
      Part2
    </a>
    <Tool label="New sheet" className="w-[76px] border-r-2 border-[#555]">
      <Icon w={22} h={22}>
        <path d="M11 1v20M1 11h20" stroke="#b4b4b4" strokeWidth="4" />
      </Icon>
    </Tool>
  </nav>
);

const StatusBar = () => (
  <footer className="relative flex h-[45px] shrink-0 items-center bg-linear-to-b from-[#494949] to-[#3a3a3a] text-2xl text-[#ececec]">
    <span className="pl-12">Ready</span>
    <Tool label="Record macro" className="ml-10">
      <Icon w={32} h={30} className="stroke-[#ececec]">
        <path d="M10 5v18M1 23h15M2 23q0 5 5 5h13q4 0 4-5V4q0-3 5-3" />
        <circle cx="10" cy="3" r="4" fill="#ececec" />
        <path d="M3 24h14v4H7Z" fill="#ececec" stroke="none" />
      </Icon>
    </Tool>
    <button type="button" className="ml-7 flex items-center gap-1.5">
      <Icon w={32} h={30} className="stroke-[#ececec]">
        <circle cx="14" cy="5" r="4" />
        <path d="M2 3q-2 4 3 6 4 1 4 5L5 26q0 3 3 2l6-10M26 3q2 4-3 6-4 1-4 5M18 16l12 12M30 16 18 28" />
      </Icon>
      Accessibility: Investigate
    </button>
    <div className="ml-auto flex h-full items-center">
      <Tool label="Normal" className="h-full w-[74px] bg-[#5e5e5e]">
        <Icon w={28} h={28} className="stroke-white">
          <path d="M2 2h24v24H2ZM2 10h24M2 18h24M10 2v24M18 2v24" />
        </Icon>
      </Tool>
      <Tool label="Page Layout" className="ml-5">
        <Icon w={30} h={28} className="stroke-white">
          <path d="M2 2h26v24H2ZM8 6h14v16H8ZM11 10h8M11 14h8M11 18h8" />
        </Icon>
      </Tool>
      <Tool label="Page Break Preview" className="ml-10">
        <Icon w={30} h={28} className="stroke-white">
          <path d="M2 2h26v24H2ZM2 16h17V2M10 2v14" />
        </Icon>
      </Tool>
      <Tool label="Zoom out" className="ml-10">
        <Icon w={18} h={18}>
          <path d="M1 9h16" stroke="#fff" strokeWidth="4" />
        </Icon>
      </Tool>
      <input
        type="range"
        aria-label="Zoom"
        defaultValue={50}
        className="mx-3 h-2 w-[200px] appearance-none rounded-full bg-[#777] [&::-webkit-slider-thumb]:size-8 [&::-webkit-slider-thumb]:appearance-none [&::-webkit-slider-thumb]:rounded-full [&::-webkit-slider-thumb]:bg-[#a2a2a2]"
      />
      <Tool label="Zoom in">
        <Icon w={18} h={18}>
          <path d="M1 9h16M9 1v16" stroke="#fff" strokeWidth="4" />
        </Icon>
      </Tool>
      <span className="w-[145px] pl-8">100%</span>
    </div>
    <div
      role="tooltip"
      className="absolute bottom-[34px] left-[104px] flex h-9 items-center border border-[#5a5a5a] bg-[#3a3b3d] px-3 text-[22px] whitespace-nowrap text-[#ececec] shadow-md shadow-black/50"
    >
      In Ready mode
    </div>
  </footer>
);

const App = () => {
  return (
    <main className="flex h-screen flex-col overflow-hidden bg-[#282828] font-['Inter','Liberation_Sans',sans-serif]">
      <header className="shrink-0">
        <TitleBar />
        <Menu />
        <Ribbon />
        <FormulaBar />
      </header>
      <Sheet />
      <SheetTabs />
      <StatusBar />
    </main>
  );
};

export default App;
